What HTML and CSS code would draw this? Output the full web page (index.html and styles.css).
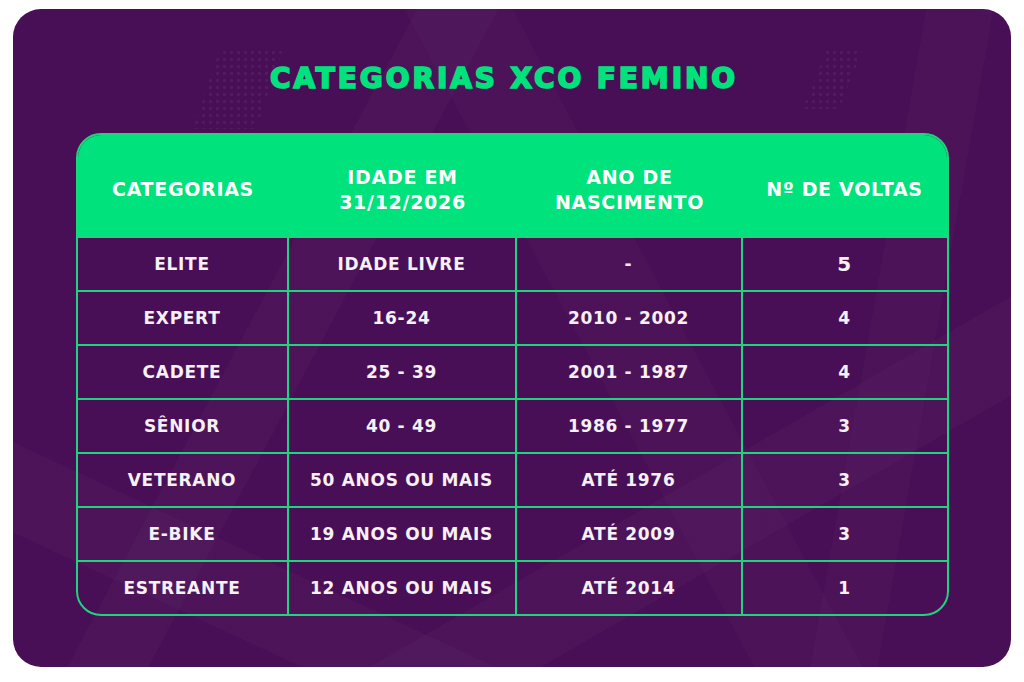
FILE: index.html
```html
<!DOCTYPE html>
<html lang="pt-BR">
<head>
<meta charset="utf-8">
<title>Categorias XCO Femino</title>
<link rel="stylesheet" href="styles.css">
</head>
<body>
<main class="card">
  <div class="deco deco-dots-a"></div>
  <div class="deco deco-dots-b"></div>
  <h1 class="title">CATEGORIAS XCO FEMINO</h1>
  <div class="table">
    <div class="row head">
      <div class="cell">CATEGORIAS</div>
      <div class="cell">IDADE EM<br>31/12/2026</div>
      <div class="cell">ANO DE<br>NASCIMENTO</div>
      <div class="cell">Nº DE VOLTAS</div>
    </div>
    <div class="row">
      <div class="cell">ELITE</div>
      <div class="cell">IDADE LIVRE</div>
      <div class="cell">-</div>
      <div class="cell big">5</div>
    </div>
    <div class="row">
      <div class="cell">EXPERT</div>
      <div class="cell">16-24</div>
      <div class="cell">2010 - 2002</div>
      <div class="cell">4</div>
    </div>
    <div class="row">
      <div class="cell">CADETE</div>
      <div class="cell">25 - 39</div>
      <div class="cell">2001 - 1987</div>
      <div class="cell">4</div>
    </div>
    <div class="row">
      <div class="cell">SÊNIOR</div>
      <div class="cell">40 - 49</div>
      <div class="cell">1986 - 1977</div>
      <div class="cell">3</div>
    </div>
    <div class="row">
      <div class="cell">VETERANO</div>
      <div class="cell">50 ANOS OU MAIS</div>
      <div class="cell">ATÉ 1976</div>
      <div class="cell">3</div>
    </div>
    <div class="row">
      <div class="cell">E-BIKE</div>
      <div class="cell">19 ANOS OU MAIS</div>
      <div class="cell">ATÉ 2009</div>
      <div class="cell">3</div>
    </div>
    <div class="row">
      <div class="cell">ESTREANTE</div>
      <div class="cell">12 ANOS OU MAIS</div>
      <div class="cell">ATÉ 2014</div>
      <div class="cell">1</div>
    </div>
  </div>
</main>
</body>
</html>
```

FILE: styles.css
```css
html, body {
  margin: 0;
  padding: 0;
  background: #ffffff;
}

body {
  width: 1024px;
  height: 682px;
  padding: 9px 13px 0 13px;
  box-sizing: border-box;
  font-family: "DejaVu Sans", "Liberation Sans", sans-serif;
}

.card {
  position: relative;
  width: 998px;
  height: 658px;
  box-sizing: border-box;
  border-radius: 28px;
  overflow: hidden;
  padding-top: 56px;
  display: flex;
  flex-direction: column;
  align-items: center;
  background-color: #490f56;
  background-image:
    linear-gradient(118deg, transparent 0 30%, rgba(255,255,255,0.018) 30% 36%, transparent 36% 100%),
    linear-gradient(62deg, transparent 0 55%, rgba(255,255,255,0.016) 55% 63%, transparent 63% 100%),
    linear-gradient(150deg, transparent 0 70%, rgba(255,255,255,0.018) 70% 78%, transparent 78% 100%),
    linear-gradient(25deg, transparent 0 12%, rgba(255,255,255,0.018) 12% 20%, transparent 20% 100%),
    linear-gradient(100deg, transparent 0 82%, rgba(255,255,255,0.015) 82% 88%, transparent 88% 100%);
}

.deco {
  position: absolute;
  background-image: radial-gradient(circle, rgba(255,255,255,0.05) 1.3px, transparent 1.8px);
  background-size: 7px 7px;
  pointer-events: none;
}

.deco-dots-a {
  left: 180px;
  top: 40px;
  width: 90px;
  height: 80px;
  clip-path: polygon(30% 0, 100% 0, 70% 100%, 0 100%);
}

.deco-dots-b {
  left: 790px;
  top: 40px;
  width: 60px;
  height: 60px;
  clip-path: polygon(40% 0, 100% 0, 60% 100%, 0 100%);
}

.title {
  position: relative;
  margin: 0 0 40px 0;
  padding-right: 16px;
  font-family: "DejaVu Sans", sans-serif;
  font-weight: 700;
  font-size: 28px;
  line-height: 28px;
  letter-spacing: 2.9px;
  color: #00e27c;
  -webkit-text-stroke: 1.7px #00e27c;
}

.table {
  position: relative;
  width: 873px;
  box-sizing: border-box;
  border: 2px solid #1fd47a;
  border-radius: 25px;
  overflow: hidden;
}

.row {
  display: grid;
  grid-template-columns: 211px 228px 226px 204px;
  height: 54px;
  border-top: 2px solid #1fd47a;
  box-sizing: border-box;
}

.row.head {
  height: 101px;
  border-top: none;
  background: #00e27c;
  padding-top: 8px;
}

.cell {
  display: flex;
  align-items: center;
  justify-content: center;
  text-align: center;
  color: #f6f1f6;
  font-weight: 700;
  font-size: 17px;
  letter-spacing: 0.7px;
  box-sizing: border-box;
  border-right: 2px solid #1fd47a;
}

.cell:last-child {
  border-right: none;
}

.head .cell {
  border-right: none;
  color: #ffffff;
  font-size: 19px;
  line-height: 25px;
  letter-spacing: 0.7px;
}

.cell.big {
  font-size: 20px;
}
```
